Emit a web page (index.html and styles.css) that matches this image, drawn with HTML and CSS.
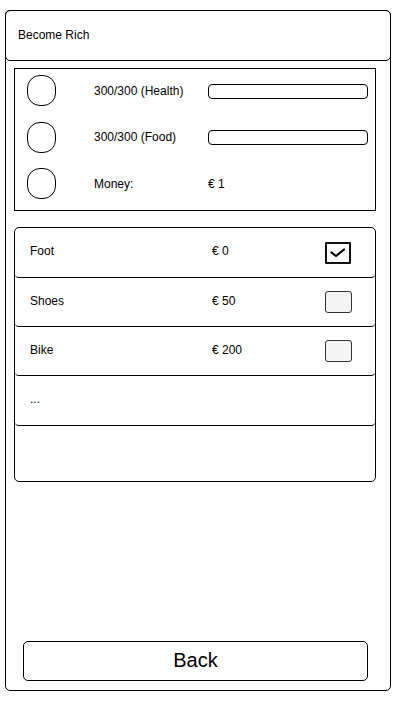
FILE: index.html
```html
<!DOCTYPE html>
<html>
<head>
<meta charset="utf-8">
<title>Become Rich</title>
<link rel="stylesheet" href="styles.css">
</head>
<body>
<div class="frame">
  <div class="header">Become Rich</div>

  <div class="stats">
    <div class="stat">
      <span class="icon"></span>
      <span class="label">300/300 (Health)</span>
      <span class="bar"></span>
    </div>
    <div class="stat">
      <span class="icon"></span>
      <span class="label">300/300 (Food)</span>
      <span class="bar"></span>
    </div>
    <div class="stat">
      <span class="icon"></span>
      <span class="label">Money:</span>
      <span class="value">€ 1</span>
    </div>
  </div>

  <div class="list">
    <div class="item">
      <span class="name">Foot</span>
      <span class="price">€ 0</span>
      <span class="check checked">
        <svg width="22" height="18" viewBox="0 0 22 18"><path d="M4.5 8.5 L9 12 L17 5.5" fill="none" stroke="#000" stroke-width="2.2" stroke-linecap="round" stroke-linejoin="round"/></svg>
      </span>
    </div>
    <div class="item">
      <span class="name">Shoes</span>
      <span class="price">€ 50</span>
      <span class="check"></span>
    </div>
    <div class="item">
      <span class="name">Bike</span>
      <span class="price">€ 200</span>
      <span class="check"></span>
    </div>
    <div class="item more">
      <span class="name">...</span>
    </div>
  </div>

  <button class="back">Back</button>
</div>
</body>
</html>
```

FILE: styles.css
```css
* { box-sizing: border-box; }

html, body {
  margin: 0;
  padding: 0;
  background: #fff;
}

body {
  font-family: "Liberation Sans", Arial, sans-serif;
  font-size: 12px;
  color: #000;
}

.frame {
  margin: 10px 0 0 5px;
  width: 386px;
  height: 681px;
  border: 1px solid #000;
  border-radius: 5px;
  display: flex;
  flex-direction: column;
}

.header {
  margin: -1px -1px 0;
  height: 51px;
  border: 1px solid #000;
  border-radius: 5px;
  padding: 0 0 2px 12px;
  display: flex;
  align-items: center;
}

.stats {
  margin: 7px 0 0 8px;
  width: 362px;
  height: 143px;
  border: 1px solid #000;
  padding: 6px 0 0 12px;
  display: flex;
  flex-direction: column;
  gap: 15.5px;
}

.stat {
  display: flex;
  align-items: center;
  height: 31px;
}

.icon {
  width: 29px;
  height: 31px;
  border: 1px solid #000;
  border-radius: 13px;
  margin-right: 38px;
  flex: none;
}

.label {
  width: 114px;
  flex: none;
}

.bar {
  width: 160px;
  height: 15px;
  border: 1px solid #000;
  border-radius: 4px;
  margin-top: 1px;
}

.list {
  margin: 16px 0 0 8px;
  width: 362px;
  height: 255px;
  border: 1px solid #000;
  border-radius: 5px;
  display: flex;
  flex-direction: column;
}

.item {
  height: 49px;
  border-bottom: 1px solid #000;
  border-radius: 0 0 4px 4px;
  display: flex;
  align-items: center;
  padding-left: 15px;
}

.item:first-child { height: 50px; }
.item.more { height: 50px; }

.name {
  width: 182px;
  flex: none;
  padding-bottom: 3px;
}

.price {
  width: 113px;
  flex: none;
  padding-bottom: 3px;
}

.check {
  width: 27px;
  height: 22px;
  border: 1px solid #333;
  border-radius: 3px;
  background: #f4f4f4;
  display: flex;
  align-items: center;
  justify-content: center;
}

.check.checked {
  border: 2px solid #111;
  border-radius: 1px;
  background: #fff;
  width: 26px;
}

.back {
  margin: auto 0 9px 17px;
  width: 345px;
  height: 40px;
  border: 1px solid #000;
  border-radius: 5px;
  background: #fff;
  font-family: "Liberation Sans", Arial, sans-serif;
  font-size: 20px;
  color: #000;
  padding: 0 0 2px;
}
```
